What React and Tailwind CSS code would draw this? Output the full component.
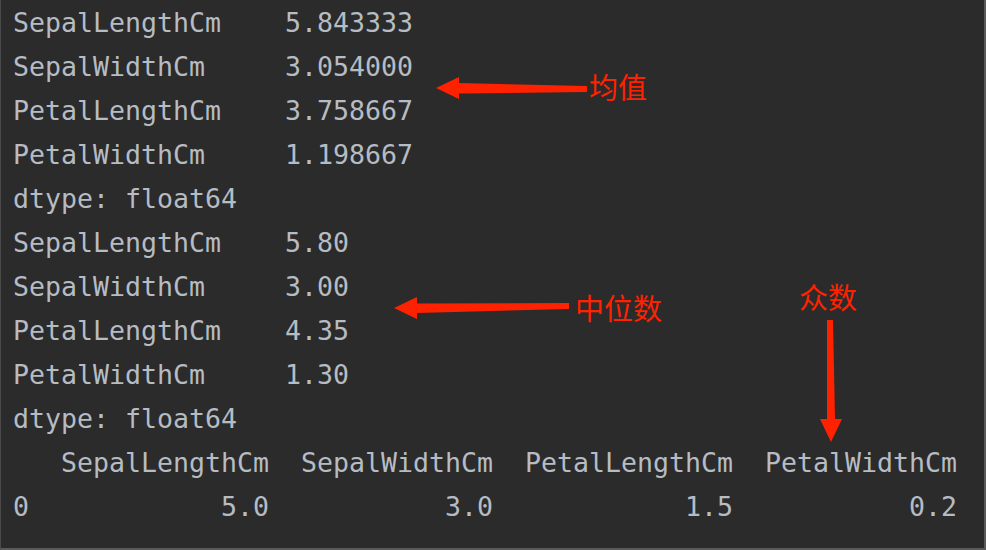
import React from "react";

const lines = [
  "SepalLengthCm    5.843333",
  "SepalWidthCm     3.054000",
  "PetalLengthCm    3.758667",
  "PetalWidthCm     1.198667",
  "dtype: float64",
  "SepalLengthCm    5.80",
  "SepalWidthCm     3.00",
  "PetalLengthCm    4.35",
  "PetalWidthCm     1.30",
  "dtype: float64",
  "   SepalLengthCm  SepalWidthCm  PetalLengthCm  PetalWidthCm",
  "0            5.0           3.0            1.5           0.2",
];

const label =
  "absolute text-[29px] leading-[40px] text-[#ff2200] font-['Noto_Sans_CJK_SC',sans-serif]";

export default function App() {
  return (
    <div className="relative w-[986px] h-[550px] bg-[#2b2b2b] border-l border-l-[#4a4a4a] border-r-2 border-r-[#5a5a5a] border-b-2 border-b-[#5a5a5a] overflow-hidden">
      <div className="flex flex-col pl-[12px] pt-[1px] text-[26.58px] leading-[44px] text-[#b6bcc3] whitespace-pre font-['DejaVu_Sans_Mono',monospace]">
        {lines.map((l, i) => (
          <div key={i} className="h-[44px]">{l}</div>
        ))}
      </div>

      <svg className="absolute left-0 top-0" width="986" height="550" viewBox="0 0 986 550">
        <g fill="#ff2200">
          <polygon points="586,86 586,92 458,93.5 458,99 435,88 458,77 458,83" />
          <polygon points="568,303 568,309 416,313 416,319 393,308 416,297 416,303.5" />
          <polygon points="826,320 832,320 834,419 841,419 830,442 819,419 826,419" />
        </g>
      </svg>

      <div className={`${label} left-[588px] top-[66px]`}>均值</div>
      <div className={`${label} left-[574px] top-[287px]`}>中位数</div>
      <div className={`${label} left-[798px] top-[276px]`}>众数</div>
    </div>
  );
}
